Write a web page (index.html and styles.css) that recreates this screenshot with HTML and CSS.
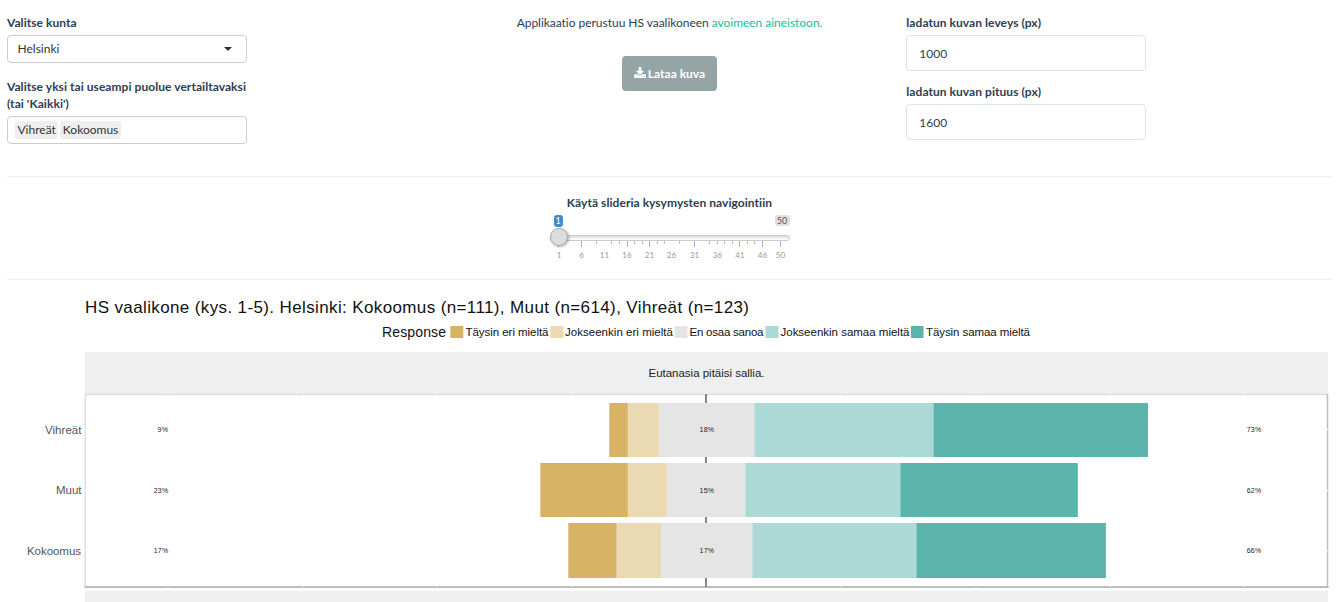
FILE: index.html
```html
<!DOCTYPE html>
<html lang="fi">
<head>
<meta charset="utf-8">
<title>HS vaalikone</title>
<link rel="stylesheet" href="styles.css">
</head>
<body>
<main class="page">
  <section class="controls">
    <div class="column">
      <label class="label">Valitse kunta</label>
      <div class="select"><span>Helsinki</span><span class="caret"></span></div>
      <label class="label label-spaced">Valitse yksi tai useampi puolue vertailtavaksi (tai 'Kaikki')</label>
      <div class="select tags"><span class="tag">Vihreät</span><span class="tag">Kokoomus</span></div>
    </div>
    <div class="column center">
      <p class="intro">Applikaatio perustuu HS vaalikoneen <a class="link">avoimeen aineistoon.</a></p>
      <button class="button">
        <svg class="icon" viewBox="0 0 1664 1536" width="12" height="11"><path fill="currentColor" d="M1280 1344q0-26-19-45t-45-19-45 19-19 45 19 45 45 19 45-19 19-45zm256 0q0-26-19-45t-45-19-45 19-19 45 19 45 45 19 45-19 19-45zm128-224v320q0 40-28 68t-68 28H96q-40 0-68-28t-28-68v-320q0-40 28-68t68-28h465l135 136q58 56 136 56t136-56l136-136h464q40 0 68 28t28 68zm-325-569q17 41-14 70L877 1069q-18 19-45 19t-45-19L339 621q-31-29-14-70 17-39 59-39h256V64q0-26 19-45t45-19h256q26 0 45 19t19 45v448h256q42 0 59 39z"/></svg>
        <span>Lataa kuva</span>
      </button>
    </div>
    <div class="column">
      <label class="label">ladatun kuvan leveys (px)</label>
      <input class="input" value="1000">
      <label class="label label-second">ladatun kuvan pituus (px)</label>
      <input class="input" value="1600">
    </div>
  </section>
  <section class="navigation">
    <label class="label">Käytä slideria kysymysten navigointiin</label>
    <div class="slider">
      <div class="slider-values"><span class="slider-current">1</span><span class="slider-max">50</span></div>
      <div class="track"><span class="handle"></span></div>
      <svg class="scale" width="240" height="24" viewBox="0 0 240 24">
        <path class="tick-major" d="M8.5 0v6M31.5 0v6M77.500 0v6M99.500 0v6M144.500 0v6M189.500 0v6M212.500 0v6M230.500 0v6"/>
        <path class="tick-minor" d="M46.500 0v3M61.500 0v3M69.500 0v3M84.500 0v3M92.500 0v3M107.500 0v3M114.500 0v3M129.500 0v3M159.500 0v3M167.500 0v3M174.500 0v3M182.500 0v3M197.500 0v3M204.500 0v3"/>
        <g class="scale-label">
          <text x="9" y="17">1</text><text x="31.500" y="17">6</text><text x="54.500" y="17">11</text><text x="77" y="17">16</text><text x="99.500" y="17">21</text><text x="121.500" y="17">26</text><text x="144.500" y="17">31</text><text x="167.500" y="17">36</text><text x="190" y="17">41</text><text x="212.500" y="17">46</text><text x="230.500" y="17">50</text>
        </g>
      </svg>
    </div>
  </section>
  <svg class="chart" width="1334" height="322" viewBox="7 280 1334 322">
    <text class="title" x="85" y="313" textLength="664">HS vaalikone (kys. 1-5). Helsinki: Kokoomus (n=111), Muut (n=614), Vihreät (n=123)</text>
    <g class="legend">
      <text class="legend-title" x="382" y="337" textLength="64">Response</text>
      <rect class="c1" x="450.300" y="326" width="13" height="12"/><text x="465.500" y="336" textLength="83">Täysin eri mieltä</text>
      <rect class="c2" x="550.500" y="326" width="13" height="12"/><text x="565" y="336" textLength="108">Jokseenkin eri mieltä</text>
      <rect class="c3" x="674.500" y="326" width="13" height="12"/><text x="689.500" y="336" textLength="74">En osaa sanoa</text>
      <rect class="c4" x="765.500" y="326" width="13" height="12"/><text x="780.500" y="336" textLength="129">Jokseenkin samaa mieltä</text>
      <rect class="c5" x="911" y="326" width="12.500" height="12"/><text x="926" y="336" textLength="104">Täysin samaa mieltä</text>
    </g>
    <rect class="strip" x="85" y="352" width="1243" height="43"/>
    <text class="strip-text" x="648.500" y="377" textLength="116">Eutanasia pitäisi sallia.</text>
    <path class="frame-light" d="M85.250 394V588M84.500 394.500H1328"/>
    <path class="frame-side" d="M1327.500 394V588"/>
    <path class="frame-dark" d="M84.500 587H1328.500"/>
    <path class="notches" d="M168 394v1M303 394v1M437 394v1M572 394v1M841 394v1M976 394v1M1110 394v1M1244 394v1M168 586v1M303 586v1M437 586v1M572 586v1M841 586v1M976 586v1M1110 586v1M1244 586v1M84 429.500h2M84 490.500h2M84 550.500h2M1326 429.500h2M1326 490.500h2M1326 550.500h2"/>
    <path class="zero" d="M706 394V587"/>
    <g>
      <rect class="c1" x="609.300" y="403" width="18.700" height="54"/><rect class="c2" x="627.700" y="403" width="31.300" height="54"/><rect class="c3" x="658.700" y="403" width="96" height="54"/><rect class="c4" x="754.400" y="403" width="179.500" height="54"/><rect class="c5" x="933.600" y="403" width="214.400" height="54"/>
      <rect class="c1" x="540.300" y="463" width="87.700" height="54"/><rect class="c2" x="627.700" y="463" width="39.300" height="54"/><rect class="c3" x="666.700" y="463" width="79" height="54"/><rect class="c4" x="745.400" y="463" width="155.500" height="54"/><rect class="c5" x="900.500" y="463" width="177.300" height="54"/>
      <rect class="c1" x="568.300" y="523" width="48.500" height="55"/><rect class="c2" x="616.600" y="523" width="44.500" height="55"/><rect class="c3" x="660.700" y="523" width="92" height="55"/><rect class="c4" x="752.400" y="523" width="164.500" height="55"/><rect class="c5" x="916.600" y="523" width="189.300" height="55"/>
    </g>
    <g class="party">
      <text x="45" y="434" textLength="36.500">Vihreät</text><text x="56" y="494" textLength="25.500">Muut</text><text x="27" y="555" textLength="54">Kokoomus</text>
    </g>
    <g class="percent">
      <text x="157.500" y="432" textLength="10.500">9%</text><text x="153.700" y="493" textLength="14.500">23%</text><text x="153.700" y="553" textLength="14.500">17%</text>
      <text x="699.500" y="432" textLength="14.500">18%</text><text x="699.500" y="493" textLength="14.500">15%</text><text x="699.500" y="553" textLength="14.500">17%</text>
      <text x="1246.700" y="432" textLength="14.500">73%</text><text x="1246.700" y="493" textLength="14.500">62%</text><text x="1246.700" y="553" textLength="14.500">66%</text>
    </g>
    <rect class="strip" x="85" y="591" width="1243" height="11"/>
  </svg>
</main>
</body>
</html>
```
FILE: styles.css
```css
* { box-sizing: border-box; }
body { margin: 0; overflow: hidden; background: #fff; color: #2c3e50; font: 12px/17px Lato, sans-serif; }
.page { padding-left: 7px; }
.controls { display: grid; grid-template-columns: repeat(3, 1fr); column-gap: 24px; width: 1325px; height: 177px; padding-top: 14px; border-bottom: 1px solid #eee; }
.center { display: flex; flex-direction: column; align-items: center; }
.label { display: block; width: 242px; font-weight: 700; font-size: 12px; line-height: 17px; letter-spacing: .055px; white-space: nowrap; }
.label-spaced { margin-top: 15px; white-space: normal; }
.label-second { margin-top: 12px; }
.select { display: flex; align-items: center; justify-content: space-between; width: 240px; height: 28px; margin-top: 4px; padding: 0 14px 1px 9.500px; border: 1px solid #ccc; border-radius: 4px; color: #333; font-size: 12px; }
.caret { border: 4px solid transparent; border-top: 4px solid #333; border-bottom: 0; }
.tags { justify-content: flex-start; gap: 2px; padding: 0 7px; }
.tag { height: 18px; padding: 0 2.500px; border-radius: 3px; background: #efefef; }
.intro { margin: 0; padding-top: 0; font-size: 12px; letter-spacing: -.03px; white-space: nowrap; }
.link { color: #18bc9c; }
.button { display: flex; align-items: center; justify-content: center; gap: 2px; width: 95px; height: 35px; margin-top: 25px; padding: 0; border: 0; border-radius: 4px; background: #95a5a6; color: #fff; font: 700 12px/17px Lato, sans-serif; }
.icon { margin-top: -2px; }
.input { display: block; width: 240px; height: 36px; margin-top: 4px; padding: 1px 12px 0; border: 1px solid #dce4ec; border-radius: 4px; color: #2c3e50; font: 12px/17px Lato, sans-serif; }
.navigation { display: flex; flex-direction: column; align-items: center; width: 1325px; height: 103px; padding-top: 17px; border-bottom: 1px solid #eee; }
.navigation .label { text-align: center; }
.slider { width: 240px; margin-top: 4px; }
.slider-values { display: flex; justify-content: space-between; height: 20px; padding-left: 4px; font-size: 9px; line-height: 12px; }
.slider-current { width: 9px; height: 12px; border-radius: 3px; background: #428bca; color: #fff; text-align: center; }
.slider-max { width: 15px; height: 11px; border-radius: 3px; background: #e1e1e1; color: #555; line-height: 12px; text-align: center; }
.track { position: relative; height: 6px; border: 1px solid #ccc; border-radius: 4px; background: linear-gradient(#ddd, #fff); }
.handle { position: absolute; left: -1px; top: -8px; width: 18px; height: 18px; border: 1px solid #aaa; border-radius: 50%; background: #ddd; box-shadow: 1px 1px 3px rgba(0,0,0,.3); }
.scale { display: block; }
.tick-major { stroke: #99badb; }
.tick-minor { stroke: #bbb; }
.scale-label { fill: #999; font-size: 8px; text-anchor: middle; }
.chart { display: block; font-family: "Liberation Sans", sans-serif; }
.title { fill: #111; font-size: 17px; }
.legend { fill: #111; font-size: 11.500px; }
.legend-title { font-size: 14px; }
.c1 { fill: #d8b365; }
.c2 { fill: #ebd9b2; }
.c3 { fill: #e5e5e5; }
.c4 { fill: #acd9d5; }
.c5 { fill: #5ab4ac; }
.strip { fill: #efefef; }
.strip-text { fill: #222; font-size: 11.500px; }
.frame-light { stroke: #dedede; stroke-width: 1.500; }
.frame-side { stroke: #bdbdbd; stroke-width: 1.500; }
.frame-dark { stroke: #bdbdbd; stroke-width: 2; }
.notches { stroke: #fff; }
.zero { stroke: #858585; stroke-width: 2; }
.party { fill: #555; font-size: 11.500px; }
.percent { fill: #222; font-size: 7px; }
```
